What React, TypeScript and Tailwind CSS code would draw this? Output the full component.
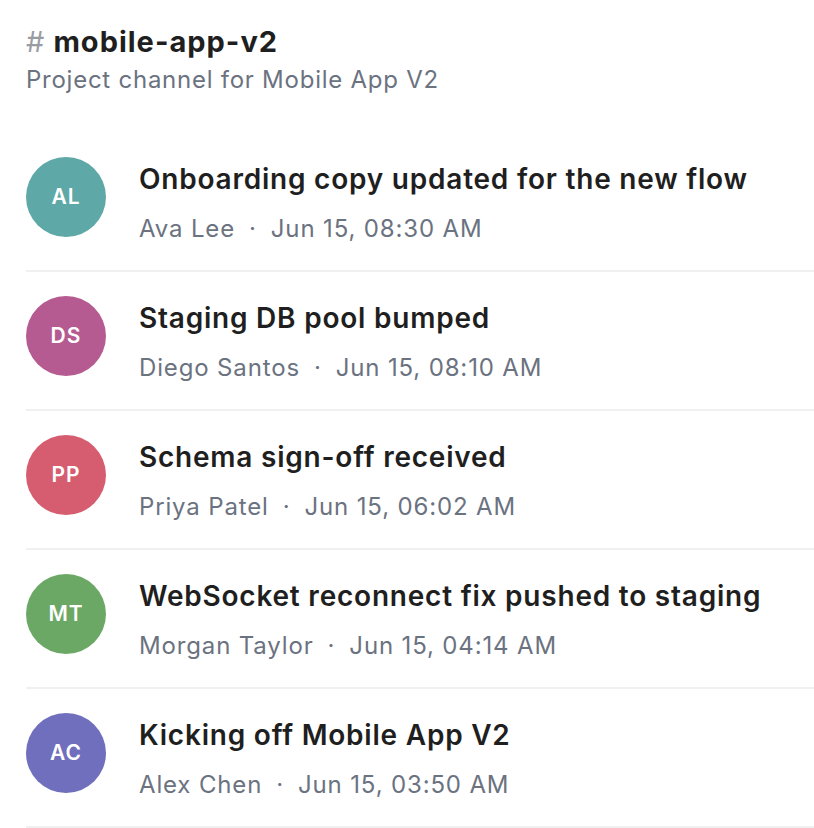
import React from "react";

type Post = {
  initials: string;
  color: string;
  title: string;
  author: string;
  time: string;
};

const posts: Post[] = [
  { initials: "AL", color: "bg-[#5ea8a8]", title: "Onboarding copy updated for the new flow", author: "Ava Lee", time: "Jun 15, 08:30 AM" },
  { initials: "DS", color: "bg-[#b55b91]", title: "Staging DB pool bumped", author: "Diego Santos", time: "Jun 15, 08:10 AM" },
  { initials: "PP", color: "bg-[#d65c6f]", title: "Schema sign-off received", author: "Priya Patel", time: "Jun 15, 06:02 AM" },
  { initials: "MT", color: "bg-[#6ba865]", title: "WebSocket reconnect fix pushed to staging", author: "Morgan Taylor", time: "Jun 15, 04:14 AM" },
  { initials: "AC", color: "bg-[#6f6fbd]", title: "Kicking off Mobile App V2", author: "Alex Chen", time: "Jun 15, 03:50 AM" },
];

export default function App() {
  return (
    <div className="min-h-screen bg-white pl-[26px] pt-[24px] font-['Inter',_'Noto_Sans',_sans-serif]">
      {/* Channel header */}
      <div>
        <h1 className="text-[29px] leading-[36px] font-bold text-[#1f1f1f] tracking-[1px]">
          <span className="text-[#9a9ca3] font-normal mr-[8px]">#</span>
          mobile-app-v2
        </h1>
        <p className="mt-[4px] text-[24px] leading-[32px] text-[#6b7280] tracking-[0.75px]">Project channel for Mobile App V2</p>
      </div>

      {/* Messages */}
      <ul className="mt-[37px]">
        {posts.map((p) => (
          <li key={p.initials} className="flex items-start gap-[33px] py-[24px] border-b-2 border-[#f0f0f0]">
            <div className={`w-[80px] h-[80px] shrink-0 rounded-full ${p.color} flex items-center justify-center`}>
              <span className="text-white text-[21px] font-semibold tracking-[1px]">{p.initials}</span>
            </div>
            <div className="flex flex-col pt-[4px]">
              <span className="text-[28px] leading-[36px] font-semibold text-[#1f1f1f] tracking-[0.78px]">{p.title}</span>
              <span className="mt-[14px] text-[24px] leading-[35px] text-[#6b7280] tracking-[0.85px]">
                {p.author}
                <span className="mx-[14px]">·</span>
                {p.time}
              </span>
            </div>
          </li>
        ))}
      </ul>
    </div>
  );
}
